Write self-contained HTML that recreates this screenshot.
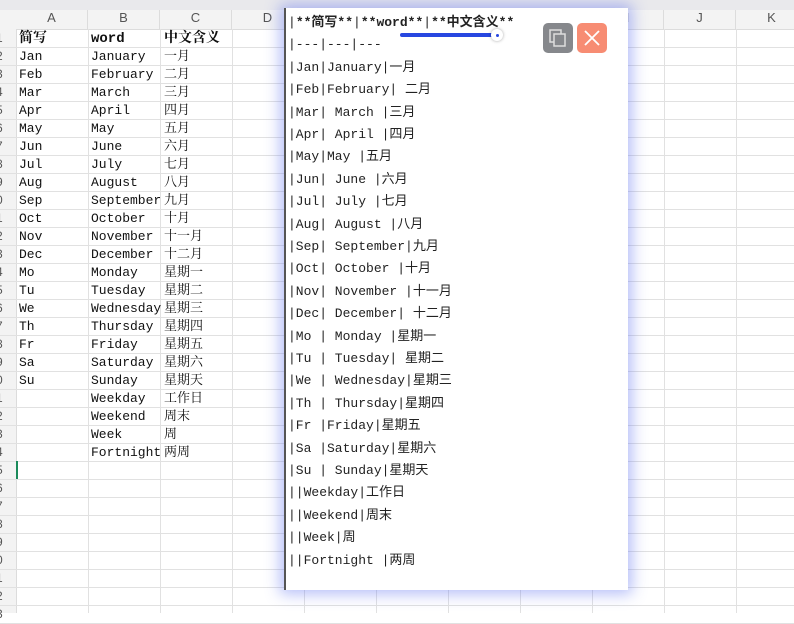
<!DOCTYPE html>
<html><head><meta charset="utf-8"><style>
body{margin:0;width:794px;height:613px;overflow:hidden;background:#fff;position:relative;font-family:"Liberation Mono","Noto Serif CJK SC",monospace;}
.top{position:absolute;left:0;top:0;width:794px;height:10px;background:#e9e9ec;}
.colh{position:absolute;top:10px;height:19px;background:#f3f3f3;border-bottom:1px solid #dcdcdc;width:794px;left:0}
.ch{position:absolute;top:10px;height:19px;line-height:19px;width:72px;text-align:center;color:#555;font:13px "Liberation Sans",sans-serif;border-right:1px solid #dcdcdc;box-sizing:border-box}
.vl{position:absolute;top:29px;bottom:0;width:1px;background:#e1e1e1}
.hl{position:absolute;left:0;width:794px;height:1px;background:#e1e1e1}
.rh{position:absolute;left:0;width:16px;background:#f3f3f3;top:29px;bottom:0;border-right:1px solid #dcdcdc}
.rn{position:absolute;left:-4px;width:10px;font:12px "Liberation Sans",sans-serif;color:#555}
.c{position:absolute;font-size:13px;line-height:18px;color:#111;white-space:nowrap}
.pop{position:absolute;left:284px;top:8px;width:344px;height:582px;background:#fff;border-left:2px solid #555;box-shadow:0 0 14px 4px rgba(90,110,240,.45);box-sizing:border-box}
.pl{position:absolute;left:2px;font:13px "Liberation Mono","Noto Sans CJK SC",monospace;color:#222;white-space:pre;line-height:18px}
.pl b{font-weight:bold}
.btn{position:absolute;top:15px;width:30px;height:30px;border-radius:5px}
</style></head><body>
<div class="top"></div>
<div class="colh"></div>
<div class="rh"></div>
<div class="ch" style="left:16px">A</div><div class="ch" style="left:88px">B</div><div class="ch" style="left:160px">C</div><div class="ch" style="left:232px">D</div><div class="ch" style="left:304px">E</div><div class="ch" style="left:376px">F</div><div class="ch" style="left:448px">G</div><div class="ch" style="left:520px">H</div><div class="ch" style="left:592px">I</div><div class="ch" style="left:664px">J</div><div class="ch" style="left:736px">K</div>
<div class="vl" style="left:88px"></div><div class="vl" style="left:160px"></div><div class="vl" style="left:232px"></div><div class="vl" style="left:304px"></div><div class="vl" style="left:376px"></div><div class="vl" style="left:448px"></div><div class="vl" style="left:520px"></div><div class="vl" style="left:592px"></div><div class="vl" style="left:664px"></div><div class="vl" style="left:736px"></div>
<div id="rows"></div>
<div style="position:absolute;left:16px;top:461px;width:2px;height:18px;background:#1a8a5a"></div>
<div class="pop">
<div style="position:absolute;left:114px;top:25px;width:94px;height:4px;background:#2747e0;border-radius:2px"></div>
<div style="position:absolute;left:205px;top:21px;width:12px;height:12px;border-radius:50%;background:#fff;box-shadow:0 0 3px rgba(0,0,0,.35)"><div style="position:absolute;left:5px;top:5px;width:3px;height:3px;background:#2747e0;border-radius:50%"></div></div>
<div id="pl"></div>
<div class="btn" style="left:257px;background:#86888c"><svg width="30" height="30"><rect x="7" y="7" width="11" height="12" fill="none" stroke="#ddd" stroke-width="1.5"/><rect x="11" y="11" width="11" height="12" fill="#86888c" stroke="#ddd" stroke-width="1.5"/></svg></div>
<div class="btn" style="left:291px;background:#f78c73"><svg width="30" height="30"><path d="M8 8L22 22M22 8L8 22" stroke="#fff" stroke-width="1.8"/></svg></div>
</div>
<script>
var d=[["简写","word","中文含义"],["Jan","January","一月"],["Feb","February","二月"],["Mar","March","三月"],["Apr","April","四月"],["May","May","五月"],["Jun","June","六月"],["Jul","July","七月"],["Aug","August","八月"],["Sep","September","九月"],["Oct","October","十月"],["Nov","November","十一月"],["Dec","December","十二月"],["Mo","Monday","星期一"],["Tu","Tuesday","星期二"],["We","Wednesday","星期三"],["Th","Thursday","星期四"],["Fr","Friday","星期五"],["Sa","Saturday","星期六"],["Su","Sunday","星期天"],["","Weekday","工作日"],["","Weekend","周末"],["","Week","周"],["","Fortnight","两周"]];
var h="";
for(var i=0;i<33;i++){var y=29+18*i;h+='<div class="hl" style="top:'+(y+18)+'px"></div><div class="rn" style="top:'+(y+2)+'px">'+((i+1)%10)+'</div>';
if(i<d.length){var w=i==0?'font-weight:bold;font-size:14px;':'';var t=y+1;h+='<div class="c" style="left:19px;top:'+t+'px;'+w+'">'+d[i][0]+'</div><div class="c" style="left:91px;top:'+t+'px;'+w+'">'+d[i][1]+'</div><div class="c" style="left:164px;top:'+t+'px;'+w+'">'+d[i][2]+'</div>';}}
document.getElementById("rows").innerHTML=h;
var p=["|<b>**简写**</b>|<b>**word**</b>|<b>**中文含义**</b>","|---|---|---","|Jan|January|一月","|Feb|February| 二月","|Mar| March |三月","|Apr| April |四月","|May|May |五月","|Jun| June |六月","|Jul| July |七月","|Aug| August |八月","|Sep| September|九月","|Oct| October |十月","|Nov| November |十一月","|Dec| December| 十二月","|Mo | Monday |星期一","|Tu | Tuesday| 星期二","|We | Wednesday|星期三","|Th | Thursday|星期四","|Fr |Friday|星期五","|Sa |Saturday|星期六","|Su | Sunday|星期天","||Weekday|工作日","||Weekend|周末","||Week|周","||Fortnight |两周"];
var q="";for(var j=0;j<p.length;j++){q+='<div class="pl" style="top:'+(6+22.4*j)+'px">'+p[j]+'</div>';}
document.getElementById("pl").innerHTML=q;
</script>
</body></html>
